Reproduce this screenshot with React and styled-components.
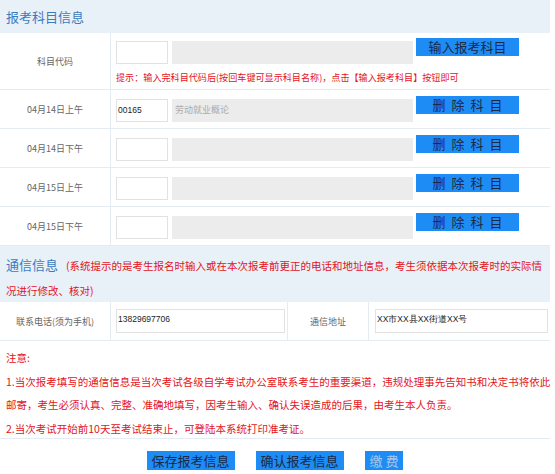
import React from "react";
import styled, { createGlobalStyle } from "styled-components";

const GlobalStyle = createGlobalStyle`
  html, body {
    margin: 0;
    padding: 0;
    background: #ffffff;
  }
  body {
    font-family: "Noto Sans CJK SC", "Liberation Sans", sans-serif;
  }
`;

const subjects = [
  { date: "04月14日上午", code: "00165", name: "劳动就业概论" },
  { date: "04月14日下午", code: "", name: "" },
  { date: "04月15日上午", code: "", name: "" },
  { date: "04月15日下午", code: "", name: "" },
];

function App() {
  return (
    <>
      <GlobalStyle />
      <Page>
        <SectionHead $h={33}>
          <Title>报考科目信息</Title>
        </SectionHead>

        <Row $h={56}>
          <Label>科目代码</Label>
          <Cell $top={5}>
            <InputLine>
              <CodeInput />
              <NameInput />
              <BlueButton>输入报考科目</BlueButton>
            </InputLine>
            <Hint>
              提示：输入完科目代码后(按回车键可显示科目名称)，点击【输入报考科目】按钮即可
            </Hint>
          </Cell>
        </Row>

        {subjects.map((s) => (
          <Row key={s.date} $h={38}>
            <Label>{s.date}</Label>
            <Cell $top={6}>
              <InputLine>
                <CodeInput>{s.code}</CodeInput>
                <NameInput>{s.name}</NameInput>
                <BlueButton $spaced>删除科目</BlueButton>
              </InputLine>
            </Cell>
          </Row>
        ))}

        <SectionHead $h={56} $wrap>
          <Title>通信信息</Title>
          <RedNote>
            (系统提示的是考生报名时输入或在本次报考前更正的电话和地址信息，考生须依据本次报考时的实际情
            <br />
            况进行修改、核对)
          </RedNote>
        </SectionHead>

        <ContactRow>
          <Label>联系电话(须为手机)</Label>
          <ContactCell $pad={5}>
            <TextBox $w={169}>13829697706</TextBox>
          </ContactCell>
          <Label $border>通信地址</Label>
          <ContactCell $pad={6}>
            <TextBox $w={173}>XX市XX县XX街道XX号</TextBox>
          </ContactCell>
        </ContactRow>

        <Notice>
          注意:
          <br />
          1.当次报考填写的通信信息是当次考试各级自学考试办公室联系考生的重要渠道，违规处理事先告知书和决定书将依此
          <br />
          邮寄，考生必须认真、完整、准确地填写，因考生输入、确认失误造成的后果，由考生本人负责。
          <br />
          2.当次考试开始前10天至考试结束止，可登陆本系统打印准考证。
        </Notice>

        <Actions>
          <BigButton>保存报考信息</BigButton>
          <BigButton>确认报考信息</BigButton>
          <BigButton $disabled>缴 费</BigButton>
        </Actions>
      </Page>
    </>
  );
}

const Page = styled.div`
  width: 550px;
`;

const SectionHead = styled.div`
  height: ${(p) => p.$h}px;
  box-sizing: border-box;
  background: #e8f0f8;
  padding: ${(p) => (p.$wrap ? "6px 6px 0" : "0 6px")};
  display: ${(p) => (p.$wrap ? "block" : "flex")};
  align-items: center;
  line-height: 22px;
  white-space: nowrap;
`;

const Title = styled.span`
  font-size: 13px;
  color: #3a7cbf;
  margin-right: 8px;
`;

const RedNote = styled.span`
  font-size: 10.5px;
  color: #e3141b;
`;

const Row = styled.div`
  display: flex;
  height: ${(p) => p.$h}px;
  border-bottom: 1px solid #e4ebf3;
`;

const Label = styled.div`
  flex-shrink: 0;
  display: flex;
  align-items: center;
  justify-content: center;
  font-size: 9px;
  color: #666666;
  border-right: 1px solid #e4ebf3;
  border-left: ${(p) => (p.$border ? "1px solid #e4ebf3" : "none")};
  box-sizing: border-box;
  width: ${(p) => (p.$border ? "82px" : "111px")};
`;

const Cell = styled.div`
  flex: 1;
  padding: ${(p) => p.$top}px 0 0 5px;
`;

const InputLine = styled.div`
  display: flex;
  align-items: flex-start;
`;

const CodeInput = styled.div`
  width: 52px;
  height: 23px;
  margin-top: 3px;
  box-sizing: border-box;
  border: 1px solid #e2e2e2;
  background: #ffffff;
  font-family: "Liberation Sans", sans-serif;
  font-size: 8.5px;
  color: #222222;
  padding: 5px 0 0 1px;
`;

const NameInput = styled.div`
  width: 241px;
  height: 23px;
  margin: 3px 3px 0 4px;
  box-sizing: border-box;
  background: #ececec;
  font-size: 9px;
  color: #aaaaaa;
  padding: 4px 0 0 3px;
`;

const BlueButton = styled.div`
  width: 103px;
  height: 18px;
  background: #1e8cf5;
  color: #1c2a44;
  font-size: 13px;
  line-height: 18px;
  text-align: center;
  letter-spacing: ${(p) => (p.$spaced ? "6px" : "0")};
  text-indent: ${(p) => (p.$spaced ? "6px" : "0")};
`;

const Hint = styled.div`
  margin-top: 6px;
  font-size: 9.1px;
  color: #e3141b;
  white-space: nowrap;
`;

const ContactRow = styled.div`
  display: flex;
  height: 38px;
  border-bottom: 1px solid #e4ebf3;
`;

const ContactCell = styled.div`
  flex: ${(p) => (p.$pad === 5 ? "0 0 176px" : "1")};
  padding: 7px 0 0 ${(p) => p.$pad}px;
  box-sizing: border-box;
`;

const TextBox = styled.div`
  width: ${(p) => p.$w}px;
  height: 24px;
  box-sizing: border-box;
  border: 1px solid #e2e2e2;
  font-family: "Liberation Sans", sans-serif;
  font-size: 8.5px;
  color: #222222;
  padding: 4px 0 0 1px;
`;

const Notice = styled.div`
  padding: 5px 6px 0;
  height: 98px;
  box-sizing: border-box;
  border-bottom: 1px solid #e4ebf3;
  font-size: 10.5px;
  line-height: 23.5px;
  color: #e3141b;
  white-space: nowrap;
`;

const Actions = styled.div`
  display: flex;
  justify-content: center;
  gap: 21px;
  padding-top: 12px;
`;

const BigButton = styled.div`
  height: 19px;
  padding: 0 5px;
  background: #1e8cf5;
  color: ${(p) => (p.$disabled ? "#a9c6ea" : "#1c2a44")};
  font-size: 13px;
  line-height: 19px;
`;

export default App;
